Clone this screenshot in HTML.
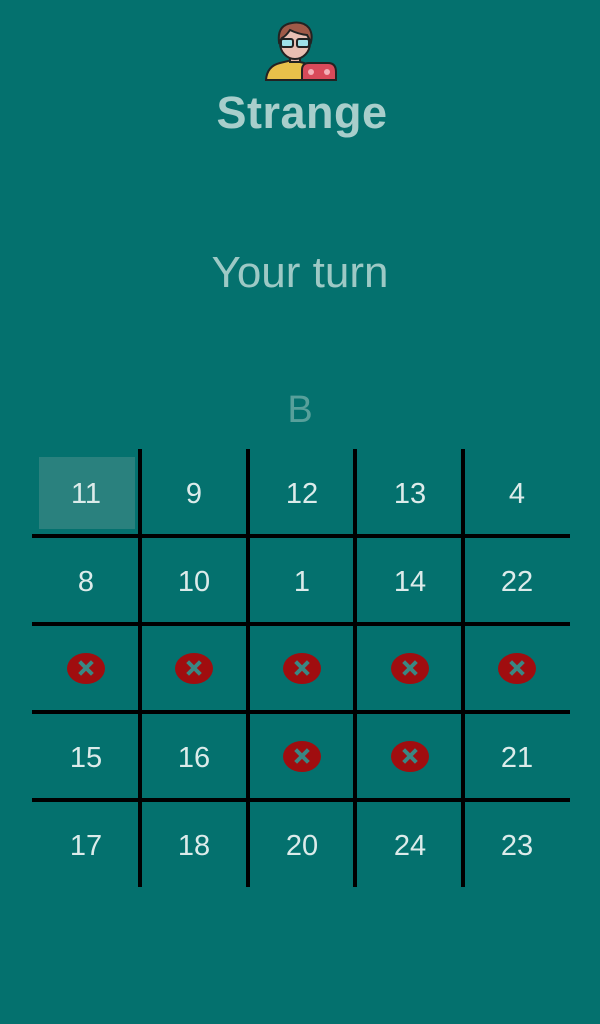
<!DOCTYPE html>
<html><head><meta charset="utf-8"><style>
*{margin:0;padding:0;box-sizing:border-box}
body{width:600px;height:1024px;background:#04716e;position:relative;overflow:hidden;font-family:"Liberation Sans",sans-serif}
.t{position:absolute;left:0;width:600px;text-align:center}
.vl{position:absolute;width:4px;background:#000;top:449px;height:438px}
.hl{position:absolute;height:4px;background:#000;left:32px;width:538px}
.n{position:absolute;width:108px;text-align:center;font-size:29px;color:#dcebea;line-height:30px}
.x{position:absolute;width:38px;height:31px;border-radius:50%;background:#a00d0f}
.x:before,.x:after{content:"";position:absolute;left:10px;top:13px;width:18px;height:4px;background:#3a8783;transform:rotate(45deg)}
.x:after{transform:rotate(-45deg)}
</style></head><body>
<svg style="position:absolute;left:264px;top:20px" width="74" height="62" viewBox="0 0 74 62">
<path d="M2 60 Q3 46 16 43 L28 40 L40 43 Q46 45 48 52 L48 60 Z" fill="#e8c04a" stroke="#222" stroke-width="2"/>
<rect x="26" y="33" width="10" height="9" fill="#e9b8a8" stroke="#222" stroke-width="2"/>
<ellipse cx="31" cy="23" rx="15" ry="16" fill="#e9bfb3" stroke="#222" stroke-width="2"/>
<path d="M15 22 Q13 5 28 3 Q39 1 45 8 Q49 14 47 22 L43 15 Q34 14 26 10 Q22 16 18 18 Z" fill="#a05a48" stroke="#222" stroke-width="2"/>
<rect x="17" y="19" width="12" height="8" rx="2" fill="#9fe0e8" stroke="#222" stroke-width="2"/>
<rect x="33" y="19" width="12" height="8" rx="2" fill="#9fe0e8" stroke="#222" stroke-width="2"/>
<path d="M38 60 L38 50 Q38 43 45 43 L64 43 Q72 43 72 52 L72 60 Z" fill="#d94a5a" stroke="#222" stroke-width="2"/>
<circle cx="47" cy="52" r="3" fill="#f3b0b8"/><circle cx="63" cy="52" r="3" fill="#f3b0b8"/>
</svg>
<div class="t" style="top:87px;font-size:45px;font-weight:bold;color:#a8cecb;letter-spacing:0.5px;padding-left:4px">Strange</div>
<div class="t" style="top:248px;font-size:44px;color:#9dc9c5;font-weight:300">Your turn</div>
<div class="t" style="top:389px;font-size:38px;color:#58a09b">B</div>
<div style="position:absolute;left:39px;top:457px;width:96px;height:72px;background:#2a817e"></div>
<div class="vl" style="left:138px"></div><div class="vl" style="left:246px"></div><div class="vl" style="left:353px"></div><div class="vl" style="left:461px"></div>
<div class="hl" style="top:534px"></div><div class="hl" style="top:622px"></div><div class="hl" style="top:710px"></div><div class="hl" style="top:798px"></div>
<div class="n" style="left:32px;top:479px">11</div><div class="n" style="left:140px;top:479px">9</div><div class="n" style="left:248px;top:479px">12</div><div class="n" style="left:356px;top:479px">13</div><div class="n" style="left:463px;top:479px">4</div>
<div class="n" style="left:32px;top:567px">8</div><div class="n" style="left:140px;top:567px">10</div><div class="n" style="left:248px;top:567px">1</div><div class="n" style="left:356px;top:567px">14</div><div class="n" style="left:463px;top:567px">22</div>
<div class="x" style="left:67px;top:653px"></div><div class="x" style="left:175px;top:653px"></div><div class="x" style="left:283px;top:653px"></div><div class="x" style="left:391px;top:653px"></div><div class="x" style="left:498px;top:653px"></div>
<div class="n" style="left:32px;top:743px">15</div><div class="n" style="left:140px;top:743px">16</div><div class="x" style="left:283px;top:741px"></div><div class="x" style="left:391px;top:741px"></div><div class="n" style="left:463px;top:743px">21</div>
<div class="n" style="left:32px;top:831px">17</div><div class="n" style="left:140px;top:831px">18</div><div class="n" style="left:248px;top:831px">20</div><div class="n" style="left:356px;top:831px">24</div><div class="n" style="left:463px;top:831px">23</div>
</body></html>
